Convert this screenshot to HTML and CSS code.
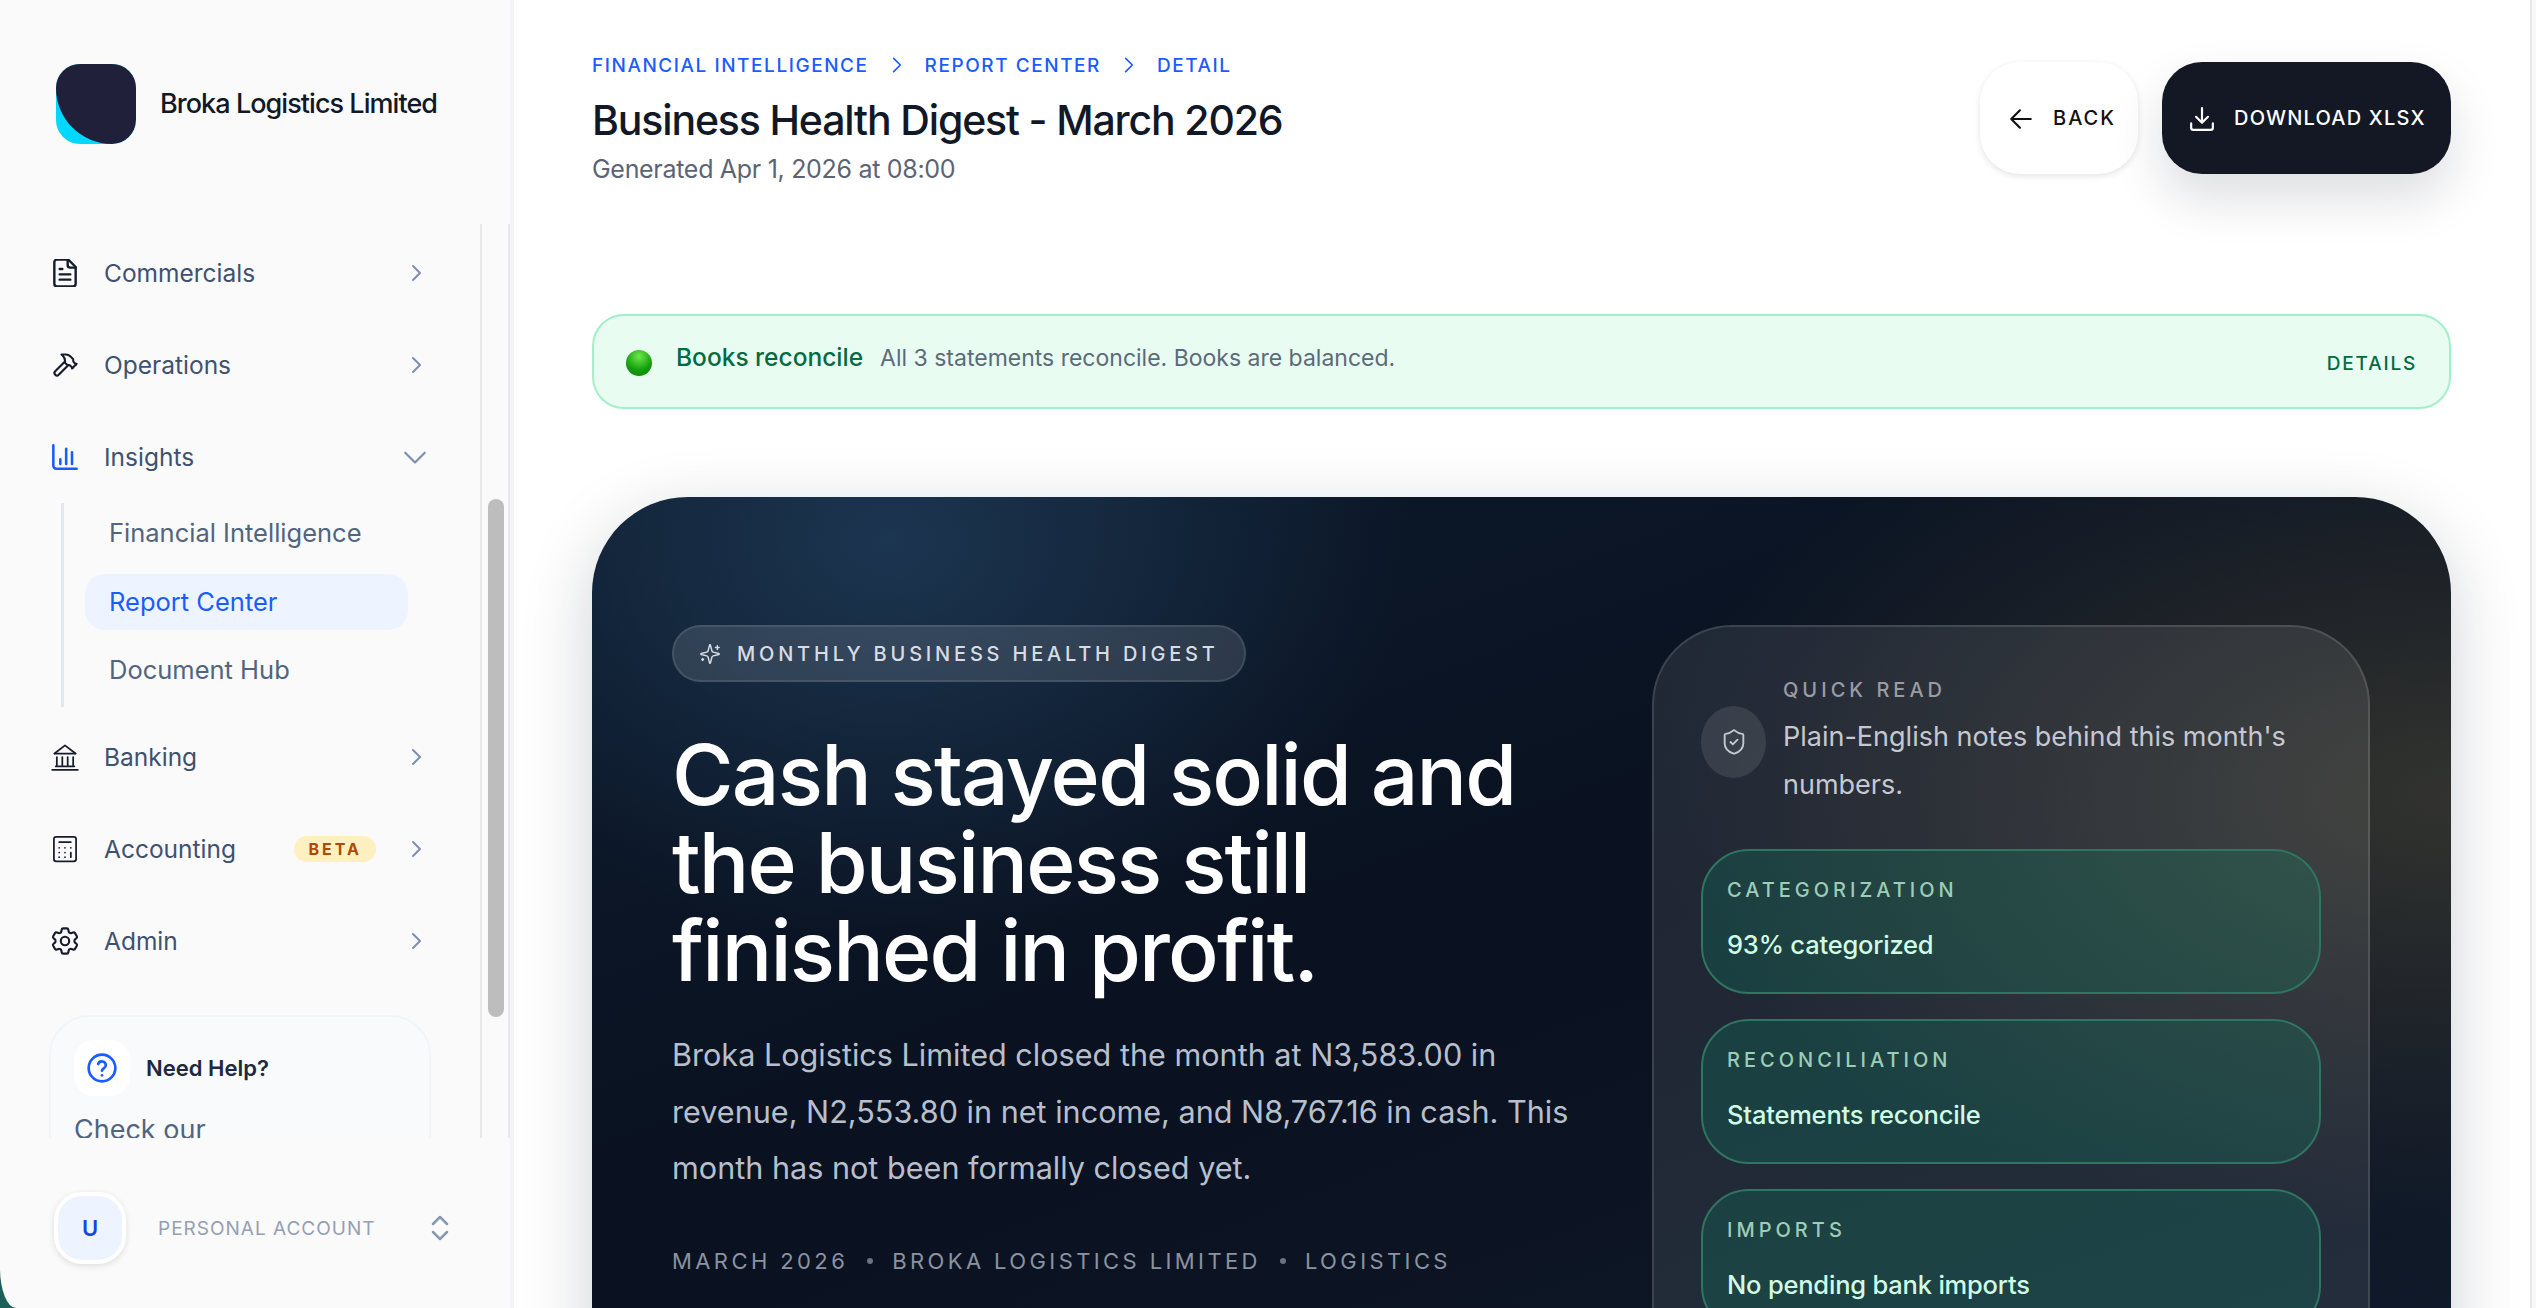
FILE: index.html
```html
<!DOCTYPE html>
<html lang="en">
<head>
    <meta charset="UTF-8">
    <meta name="viewport" content="width=device-width, initial-scale=1.0">
    <title>Business Health Digest - March 2026</title>
    <link rel="stylesheet" href="styles.css">
</head>
<body>
    <div class="app">
        <aside class="sidebar-wrap">
            <div class="sidebar">
                <div class="brand">
                    <div class="logo"><div class="logo-mark"></div></div>
                    <span class="brand-name">Broka Logistics Limited</span>
                </div>

                <div class="side-scroll">
                    <nav class="side-nav">
                        <a class="nav-row">
                            <svg class="nav-icon" viewBox="3.5 1.5 17 21"><path d="M14.5 2H6a2 2 0 0 0-2 2v16a2 2 0 0 0 2 2h12a2 2 0 0 0 2-2V7.5z"/><path d="M14 2v4a2 2 0 0 0 2 2h4"/><path d="M8 9h2M8 13h8M8 17h8"/></svg>
                            <span class="nav-label">Commercials</span>
                            <svg class="chev" viewBox="0 0 24 24"><path d="m9 5 7 7-7 7"/></svg>
                        </a>
                        <a class="nav-row">
                            <svg class="nav-icon" viewBox="0 0 24 24"><path d="m15 12-8.373 8.373a1 1 0 1 1-3-3L12 9"/><path d="m18 15 4-4"/><path d="m21.5 11.5-1.914-1.914A2 2 0 0 1 19 8.172V7l-2.26-2.26a6 6 0 0 0-4.202-1.756L9 2.96l.92.82A6.18 6.18 0 0 1 12 8.4V10l2 2h1.172a2 2 0 0 1 1.414.586L18.5 14.5"/></svg>
                            <span class="nav-label">Operations</span>
                            <svg class="chev" viewBox="0 0 24 24"><path d="m9 5 7 7-7 7"/></svg>
                        </a>
                        <a class="nav-row">
                            <svg class="nav-icon nav-icon-blue" viewBox="0 0 24 24"><path d="M2 2v17.5A2.5 2.5 0 0 0 4.5 22H22"/><path d="M8 18v-4M13 18V5M18 18V8"/></svg>
                            <span class="nav-label">Insights</span>
                            <svg class="chev chev-open" viewBox="0 0 24 24"><path d="m3 8 9 9 9-9"/></svg>
                        </a>
                        <div class="sub-list">
                            <a class="sub-item">Financial Intelligence</a>
                            <a class="sub-item sub-item-active">Report Center</a>
                            <a class="sub-item">Document Hub</a>
                        </div>
                        <a class="nav-row">
                            <svg class="nav-icon nav-icon-thin" viewBox="0 0 24 24"><path d="M1 23h22"/><path d="M3 9 12 2l9 7"/><path d="M3 9h18"/><path d="M5 12v7M9.7 12v7M14.3 12v7M19 12v7"/><path d="M4 20h16"/></svg>
                            <span class="nav-label">Banking</span>
                            <svg class="chev" viewBox="0 0 24 24"><path d="m9 5 7 7-7 7"/></svg>
                        </a>
                        <a class="nav-row">
                            <svg class="nav-icon nav-icon-thin" viewBox="0 0 24 24"><rect x="2.5" y="1.5" width="19" height="21" rx="2"/><path d="M7 6h10"/><path d="M7 11h.01M12 11h.01M17 11h.01M7 15h.01M12 15h.01M7 19h.01M12 19h.01M17 15v4"/></svg>
                            <span class="nav-label">Accounting</span>
                            <span class="beta">BETA</span>
                            <svg class="chev" viewBox="0 0 24 24"><path d="m9 5 7 7-7 7"/></svg>
                        </a>
                        <a class="nav-row">
                            <svg class="nav-icon nav-icon-thin" viewBox="2 2 20 20"><path d="M9.594 3.94c.09-.542.56-.94 1.11-.94h2.593c.55 0 1.02.398 1.11.94l.213 1.281c.063.374.313.686.645.87.074.04.147.083.22.127.325.196.72.257 1.075.124l1.217-.456a1.125 1.125 0 0 1 1.37.49l1.296 2.247a1.125 1.125 0 0 1-.26 1.431l-1.003.827c-.293.241-.438.613-.43.992a7.723 7.723 0 0 1 0 .255c-.008.378.137.75.43.991l1.004.827c.424.35.534.955.26 1.43l-1.298 2.247a1.125 1.125 0 0 1-1.369.491l-1.217-.456c-.355-.133-.75-.072-1.076.124a6.47 6.47 0 0 1-.22.128c-.331.183-.581.495-.644.869l-.213 1.281c-.09.543-.56.94-1.11.94h-2.594c-.55 0-1.019-.398-1.11-.94l-.213-1.281c-.062-.374-.312-.686-.644-.87a6.52 6.52 0 0 1-.22-.127c-.325-.196-.72-.257-1.076-.124l-1.217.456a1.125 1.125 0 0 1-1.369-.49l-1.297-2.247a1.125 1.125 0 0 1 .26-1.431l1.004-.827c.292-.24.437-.613.43-.991a6.932 6.932 0 0 1 0-.255c.007-.38-.138-.751-.43-.992l-1.004-.827a1.125 1.125 0 0 1-.26-1.43l1.297-2.247a1.125 1.125 0 0 1 1.37-.491l1.216.456c.356.133.751.072 1.076-.124.072-.044.146-.086.22-.128.332-.183.582-.495.644-.869l.214-1.28Z"/><circle cx="12" cy="12" r="3"/></svg>
                            <span class="nav-label">Admin</span>
                            <svg class="chev" viewBox="0 0 24 24"><path d="m9 5 7 7-7 7"/></svg>
                        </a>

                        <div class="help-card">
                            <div class="help-head">
                                <div class="help-icon">
                                    <svg viewBox="0 0 24 24"><circle cx="12" cy="12" r="10"/><path d="M9.1 9a3 3 0 0 1 5.8 1c0 2-2.9 2.5-2.9 4"/><path d="M12 17.5h.01"/></svg>
                                </div>
                                <span class="help-title">Need Help?</span>
                            </div>
                            <p class="help-text">Check our</p>
                        </div>
                    </nav>
                    <div class="side-track"><div class="side-thumb"></div></div>
                </div>

                <div class="account">
                    <div class="avatar"><span>U</span></div>
                    <span class="account-name">PERSONAL ACCOUNT</span>
                    <svg class="account-chev" viewBox="0 0 18 26"><path d="M2 9l7-7 7 7M2 17l7 7 7-7"/></svg>
                </div>
            </div>
        </aside>

        <main class="main">
            <header class="page-head">
                <div>
                    <div class="crumbs">
                        <span>FINANCIAL INTELLIGENCE</span>
                        <svg viewBox="0 0 24 24"><path d="m8 4 8 8-8 8"/></svg>
                        <span>REPORT CENTER</span>
                        <svg viewBox="0 0 24 24"><path d="m8 4 8 8-8 8"/></svg>
                        <span>DETAIL</span>
                    </div>
                    <h2 class="page-title">Business Health Digest - March 2026</h2>
                    <p class="page-sub">Generated Apr 1, 2026 at 08:00</p>
                </div>
                <div class="head-actions">
                    <button class="btn btn-back">
                        <svg viewBox="0 0 24 24"><path d="M21 12H3M11 4l-8 8 8 8"/></svg>
                        BACK
                    </button>
                    <button class="btn btn-download">
                        <svg viewBox="0 0 24 24"><path d="M12 2v13M6.5 10l5.5 5.5 5.5-5.5"/><path d="M2 16v4a2 2 0 0 0 2 2h16a2 2 0 0 0 2-2v-4"/></svg>
                        DOWNLOAD XLSX
                    </button>
                </div>
            </header>

            <div class="alert">
                <span class="alert-dot"></span>
                <strong class="alert-title">Books reconcile</strong>
                <span class="alert-text">All 3 statements reconcile. Books are balanced.</span>
                <a class="alert-link">DETAILS</a>
            </div>

            <section class="hero">
                <div class="hero-copy">
                    <div class="hero-pill">
                        <svg viewBox="0 0 24 24"><path d="M9.937 15.5A2 2 0 0 0 8.5 14.063l-6.135-1.582a.5.5 0 0 1 0-.962L8.5 9.936A2 2 0 0 0 9.937 8.5l1.582-6.135a.5.5 0 0 1 .963 0L14.063 8.5A2 2 0 0 0 15.5 9.937l6.135 1.581a.5.5 0 0 1 0 .964L15.5 14.063a2 2 0 0 0-1.437 1.437l-1.582 6.135a.5.5 0 0 1-.963 0z"/><path d="M20 3v4M22 5h-4M4 17v2M5 18H3"/></svg>
                        MONTHLY BUSINESS HEALTH DIGEST
                    </div>
                    <h1 class="hero-title">Cash stayed solid and<br>the business still<br>finished in profit.</h1>
                    <p class="hero-text">Broka Logistics Limited closed the month at N3,583.00 in<br>revenue, N2,553.80 in net income, and N8,767.16 in cash. This<br>month has not been formally closed yet.</p>
                    <div class="hero-meta">
                        <span>MARCH 2026</span><i></i><span>BROKA LOGISTICS LIMITED</span><i></i><span>LOGISTICS</span>
                    </div>
                </div>

                <div class="quick">
                    <div class="quick-head">
                        <div class="quick-icon">
                            <svg viewBox="0 0 24 24"><path d="M20 13c0 5-3.5 7.5-7.66 8.95a1 1 0 0 1-.67-.01C7.5 20.5 4 18 4 13V6a1 1 0 0 1 1-1c2 0 4.5-1.2 6.24-2.72a1.17 1.17 0 0 1 1.52 0C14.51 3.81 17 5 19 5a1 1 0 0 1 1 1z"/><path d="m9 12 2 2 4-4"/></svg>
                        </div>
                        <div>
                            <div class="quick-label">QUICK READ</div>
                            <p class="quick-text">Plain-English notes behind this month's<br>numbers.</p>
                        </div>
                    </div>
                    <div class="read-card">
                        <div class="read-label">CATEGORIZATION</div>
                        <div class="read-value">93% categorized</div>
                    </div>
                    <div class="read-card">
                        <div class="read-label">RECONCILIATION</div>
                        <div class="read-value">Statements reconcile</div>
                    </div>
                    <div class="read-card">
                        <div class="read-label">IMPORTS</div>
                        <div class="read-value">No pending bank imports</div>
                    </div>
                </div>
            </section>
        </main>
        <div class="page-track"></div>
    </div>
</body>
</html>
```

FILE: styles.css
```css
* {
    box-sizing: border-box;
}
html, body {
    margin: 0;
    height: 100%;
    overflow: hidden;
}
body {
    font-family: Inter, "Liberation Sans", sans-serif;
    background-color: #fff;
    color: #111827;
}
svg {
    fill: none;
    stroke: currentColor;
    stroke-width: 2;
    stroke-linecap: round;
    stroke-linejoin: round;
    flex: none;
}
p, h1, h2 {
    margin: 0;
}
.app {
    display: flex;
    height: 1308px;
}

/* sidebar */
.sidebar-wrap {
    width: 510px;
    flex: none;
    background: #1f5f5a;
    box-shadow: 4px 0 0 #f4f4f8;
    position: relative;
    z-index: 2;
}
.sidebar {
    height: 100%;
    display: flex;
    flex-direction: column;
    background-color: #fafafa;
    border-bottom-left-radius: 16px 40px;
}
.brand {
    height: 224px;
    flex: none;
    display: flex;
    gap: 24px;
    padding: 64px 0 0 56px;
}
.logo {
    width: 80px;
    height: 80px;
    border-radius: 24px;
    background-color: #00d8ff;
    overflow: hidden;
}
.logo-mark {
    height: 100%;
    background-color: #21203a;
    border-bottom-left-radius: 56px;
    border-bottom-right-radius: 24px;
}
.brand-name {
    height: 80px;
    line-height: 80px;
    font-size: 27px;
    font-weight: 500;
    letter-spacing: -0.95px;
}
.side-scroll {
    flex: 1;
    min-height: 0;
    display: flex;
    overflow: hidden;
}
.side-nav {
    width: 480px;
    flex: none;
    padding-top: 3px;
}
.nav-row {
    display: flex;
    align-items: center;
    height: 92px;
    padding: 0 52px 0 51px;
    color: #3f5170;
}
.nav-icon {
    width: 28px;
    height: 28px;
    margin-right: 25px;
    color: #161c2c;
    stroke-width: 1.8;
}
.nav-icon-thin {
    stroke-width: 1.5;
}
.nav-icon-blue {
    color: #1a5cff;
    stroke-width: 2.2;
}
.nav-label {
    flex: 1;
    font-size: 24.5px;
}
.chev {
    width: 24px;
    height: 24px;
    color: #7c8fb0;
}
.chev-open {
    width: 26px;
    height: 26px;
}
.beta {
    height: 26px;
    line-height: 26px;
    padding: 0 14px;
    margin-right: 28px;
    border-radius: 13px;
    background-color: #fef0c0;
    color: #b04a00;
    font-size: 16px;
    font-weight: 700;
    letter-spacing: 3px;
}
.sub-list {
    margin: 0 0 4px 61px;
    height: 204px;
    padding: 2px 0 0 21px;
    border-left: 3px solid #e2e8f0;
}
.sub-item {
    display: block;
    width: 323px;
    height: 56px;
    line-height: 56px;
    margin-bottom: 12.5px;
    padding-left: 24px;
    border-radius: 20px;
    font-size: 25.5px;
    color: #52647f;
}
.sub-item-active {
    background-color: #edf4ff;
    color: #1a5cff;
}
.help-card {
    width: 382px;
    height: 300px;
    margin: 28px 0 0 49px;
    padding: 23px;
    border: 2px solid #f1f5f9;
    border-radius: 40px;
    background-color: #f8fafc;
}
.help-head {
    display: flex;
    align-items: center;
    gap: 16px;
}
.help-icon {
    width: 56px;
    height: 56px;
    display: flex;
    align-items: center;
    justify-content: center;
    border-radius: 20px;
    background-color: #fff;
    color: #1a5cff;
}
.help-icon svg {
    width: 32px;
    height: 32px;
}
.help-title {
    font-size: 22px;
    font-weight: 600;
    color: #1e293b;
}
.help-text {
    margin-top: 12px;
    font-size: 27px;
    line-height: 44px;
    color: #52647f;
}
.side-track {
    width: 30px;
    flex: none;
    padding: 275px 0 0 6px;
    border-left: 2px solid #e8e8e8;
    border-right: 2px solid #e8e8e8;
}
.side-thumb {
    width: 16px;
    height: 518px;
    border-radius: 8px;
    background-color: #bdbdbd;
}
.account {
    height: 170px;
    flex: none;
    display: flex;
    align-items: center;
    padding: 10px 0 0 54px;
}
.avatar {
    width: 72px;
    height: 72px;
    display: flex;
    align-items: center;
    justify-content: center;
    border: 4px solid #fff;
    border-radius: 28px;
    background-color: #edf4ff;
    box-shadow: 0 2px 6px rgba(15, 23, 42, 0.12);
    color: #1447e6;
    font-size: 22px;
    font-weight: 600;
}
.account-name {
    margin-left: 32px;
    font-size: 19px;
    letter-spacing: 1px;
    color: #94a0b3;
}
.account-chev {
    width: 18px;
    height: 26px;
    margin-left: 56px;
    color: #8a99b0;
    stroke-width: 2.5;
}

/* main column */
.main {
    flex: 1;
    min-width: 0;
    padding: 50px 79px 0 82px;
    overflow: hidden;
}
.page-track {
    width: 6px;
    flex: none;
    background-color: #f8f8f8;
    border-left: 2px solid #e8e8e8;
}
.page-head {
    display: flex;
    justify-content: space-between;
    align-items: flex-start;
}
.crumbs {
    display: flex;
    align-items: center;
    height: 30px;
    gap: 18px;
    font-size: 19px;
    font-weight: 500;
    letter-spacing: 1.55px;
    color: #1a5cff;
}
.crumbs svg {
    width: 20px;
    height: 20px;
}
.page-title {
    margin-top: 10px;
    font-size: 41px;
    line-height: 60px;
    font-weight: 500;
    letter-spacing: -1.15px;
}
.page-sub {
    font-size: 25px;
    line-height: 38px;
    letter-spacing: -0.3px;
    color: #5b6475;
}
.head-actions {
    display: flex;
    gap: 24px;
    margin-top: 12px;
}
.btn {
    display: flex;
    align-items: flex-start;
    height: 112px;
    padding: 44px 0 0 28px;
    border: none;
    border-radius: 40px;
    font-family: inherit;
    font-size: 20px;
    line-height: 24px;
    font-weight: 500;
    letter-spacing: 2px;
}
.btn svg {
    width: 26px;
    height: 26px;
}
.btn-back {
    width: 158px;
    gap: 19px;
    background-color: #fff;
    color: #111;
    box-shadow: 0 2px 6px rgba(15, 23, 42, 0.12);
}
.btn-download {
    width: 289px;
    gap: 19px;
    padding-left: 27px;
    letter-spacing: 1.2px;
    background-color: #131824;
    color: #fff;
    box-shadow: 0 24px 50px rgba(15, 23, 42, 0.14);
}
.alert {
    display: flex;
    align-items: center;
    height: 95px;
    margin-top: 126px;
    padding: 0 32px;
    border: 2px solid #a3efc9;
    border-radius: 32px;
    background-color: #e8fcf1;
}
.alert-dot {
    width: 26px;
    height: 26px;
    margin: 2px 24px 0 0;
    border-radius: 50%;
    background: radial-gradient(circle at 50% 25%, #6fe84a, #119c0c 60%, #0a8a0a);
}
.alert-title {
    margin: -10px 17px 0 0;
    font-size: 24.5px;
    font-weight: 500;
    color: #036b42;
}
.alert-text {
    flex: 1;
    margin-top: -8px;
    font-size: 23px;
    color: #5b6b78;
}
.alert-link {
    margin-top: 3px;
    font-size: 19px;
    font-weight: 500;
    letter-spacing: 1.8px;
    color: #036b42;
}

/* hero */
.hero {
    display: flex;
    height: 1100px;
    margin-top: 88px;
    padding: 128px 81px 0 80px;
    border-radius: 96px;
    background:
        radial-gradient(ellipse 520px 400px at 16% 4%, #1c3550, rgba(28, 53, 80, 0) 100%),
        radial-gradient(ellipse 800px 440px at 100% 27%, #32332f, rgba(50, 51, 47, 0) 100%),
        linear-gradient(160deg, #0c1a2b 0%, #0a1120 45%, #121d2d 100%);
    box-shadow: 0 20px 70px rgba(15, 23, 42, 0.2);
}
.hero-copy {
    flex: 1;
    min-width: 0;
}
.hero-pill {
    display: inline-flex;
    align-items: center;
    gap: 16px;
    height: 57px;
    padding: 0 25px;
    border: 2px solid rgba(255, 255, 255, 0.1);
    border-radius: 29px;
    background-color: rgba(255, 255, 255, 0.12);
    font-size: 20px;
    font-weight: 500;
    letter-spacing: 3.8px;
    color: #d8dce3;
}
.hero-pill svg {
    width: 22px;
    height: 22px;
    stroke-width: 1.6;
}
.hero-title {
    margin-top: 49px;
    font-size: 84px;
    line-height: 88px;
    font-weight: 500;
    letter-spacing: -1.8px;
    color: #fff;
}
.hero-text {
    margin-top: 32px;
    font-size: 30.6px;
    line-height: 56.6px;
    color: #b8bfcc;
}
.hero-meta {
    display: flex;
    align-items: center;
    gap: 19px;
    height: 32px;
    margin-top: 48px;
    font-size: 22px;
    letter-spacing: 3.4px;
    color: #8b93a1;
}
.hero-meta i {
    width: 6px;
    height: 6px;
    border-radius: 50%;
    background-color: #6b7280;
}
.quick {
    width: 718px;
    height: 900px;
    flex: none;
    padding: 48px 48px 0 47px;
    border: 2px solid rgba(255, 255, 255, 0.12);
    border-radius: 80px;
    background-color: rgba(255, 255, 255, 0.09);
}
.quick-head {
    display: flex;
    align-items: center;
    gap: 17px;
}
.quick-icon {
    width: 65px;
    height: 72px;
    flex: none;
    display: flex;
    align-items: center;
    justify-content: center;
    border-radius: 50%;
    background-color: rgba(255, 255, 255, 0.1);
    color: #c5c8d0;
}
.quick-icon svg {
    width: 28px;
    height: 28px;
    stroke-width: 1.6;
}
.quick-label {
    height: 30px;
    line-height: 30px;
    font-size: 20px;
    font-weight: 500;
    letter-spacing: 4px;
    color: #9a9ca3;
}
.quick-text {
    margin-top: 8px;
    font-size: 27px;
    line-height: 48px;
    color: #c5c8d0;
}
.read-card {
    width: 620px;
    height: 145px;
    margin-top: 25px;
    padding: 24px 24px 0;
    border: 2px solid #2f7561;
    border-radius: 48px;
    background-color: rgba(7, 162, 116, 0.2);
}
.quick-head + .read-card {
    margin-top: 40px;
}
.read-label {
    height: 30px;
    line-height: 30px;
    font-size: 20px;
    font-weight: 500;
    letter-spacing: 4px;
    color: #9ccdb7;
}
.read-value {
    height: 38px;
    line-height: 38px;
    margin-top: 21px;
    font-size: 25.5px;
    font-weight: 500;
    letter-spacing: -0.2px;
    color: #d1fae5;
}
```
